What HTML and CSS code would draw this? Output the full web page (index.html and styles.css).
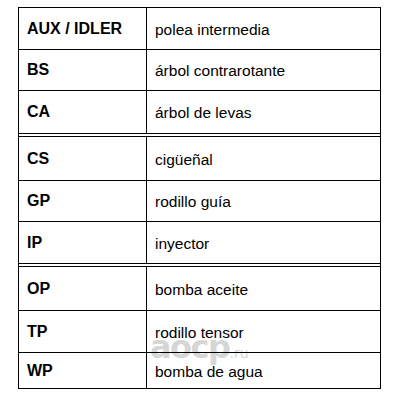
FILE: index.html
```html
<!DOCTYPE html>
<html>
<head>
<meta charset="utf-8">
<link rel="stylesheet" href="styles.css">
</head>
<body>
<div class="page">
  <div class="watermark">aocp<span class="ru">.ru</span></div>
  <div class="table">
    <div class="group g1">
      <div class="row"><div class="code">AUX / IDLER</div><div class="desc">polea intermedia</div></div>
      <div class="row"><div class="code">BS</div><div class="desc">árbol contrarotante</div></div>
      <div class="row"><div class="code">CA</div><div class="desc">árbol de levas</div></div>
    </div>
    <div class="group g2">
      <div class="row"><div class="code">CS</div><div class="desc">cigüeñal</div></div>
      <div class="row"><div class="code">GP</div><div class="desc">rodillo guía</div></div>
      <div class="row"><div class="code">IP</div><div class="desc">inyector</div></div>
    </div>
    <div class="group g3">
      <div class="row"><div class="code">OP</div><div class="desc">bomba aceite</div></div>
      <div class="row"><div class="code">TP</div><div class="desc">rodillo tensor</div></div>
      <div class="row"><div class="code">WP</div><div class="desc">bomba de agua</div></div>
    </div>
  </div>
</div>
</body>
</html>
```
FILE: styles.css
```css
html, body {
  margin: 0;
  padding: 0;
  background: #fff;
}
.page {
  position: relative;
  width: 400px;
  height: 400px;
  padding: 7px 0 0 18px;
  box-sizing: border-box;
  font-family: "Liberation Sans", Arial, sans-serif;
  color: #000;
}
.table {
  position: relative;
  width: 363px;
  box-sizing: border-box;
  border-left: 1px solid #000;
  border-right: 1px solid #000;
  display: flex;
  flex-direction: column;
  gap: 2px;
}
.group {
  border-top: 1px solid #000;
  border-bottom: 1px solid #000;
  display: grid;
}
.g1 { grid-template-rows: 41px 41px 43px; }
.g2 { grid-template-rows: 43px 41px 42px; }
.g3 { grid-template-rows: 43px 42px 36px; }
.row {
  display: grid;
  grid-template-columns: 128px 1fr;
  border-top: 1px solid #000;
}
.row:first-child { border-top: none; }
.code {
  border-right: 1px solid #000;
  display: flex;
  align-items: center;
  padding-left: 8px;
  font-weight: bold;
  font-size: 16px;
}
.desc {
  display: flex;
  align-items: center;
  padding-left: 8px;
  padding-top: 2px;
  font-size: 15.5px;
}
.watermark {
  position: absolute;
  left: 150px;
  top: 331px;
  font-family: "DejaVu Sans", sans-serif;
  font-weight: bold;
  font-size: 32px;
  line-height: 1;
  letter-spacing: -1.5px;
  color: #d6d6d6;
  pointer-events: none;
}
.watermark .ru {
  font-size: 14px;
  font-weight: normal;
  letter-spacing: 0;
}
```
